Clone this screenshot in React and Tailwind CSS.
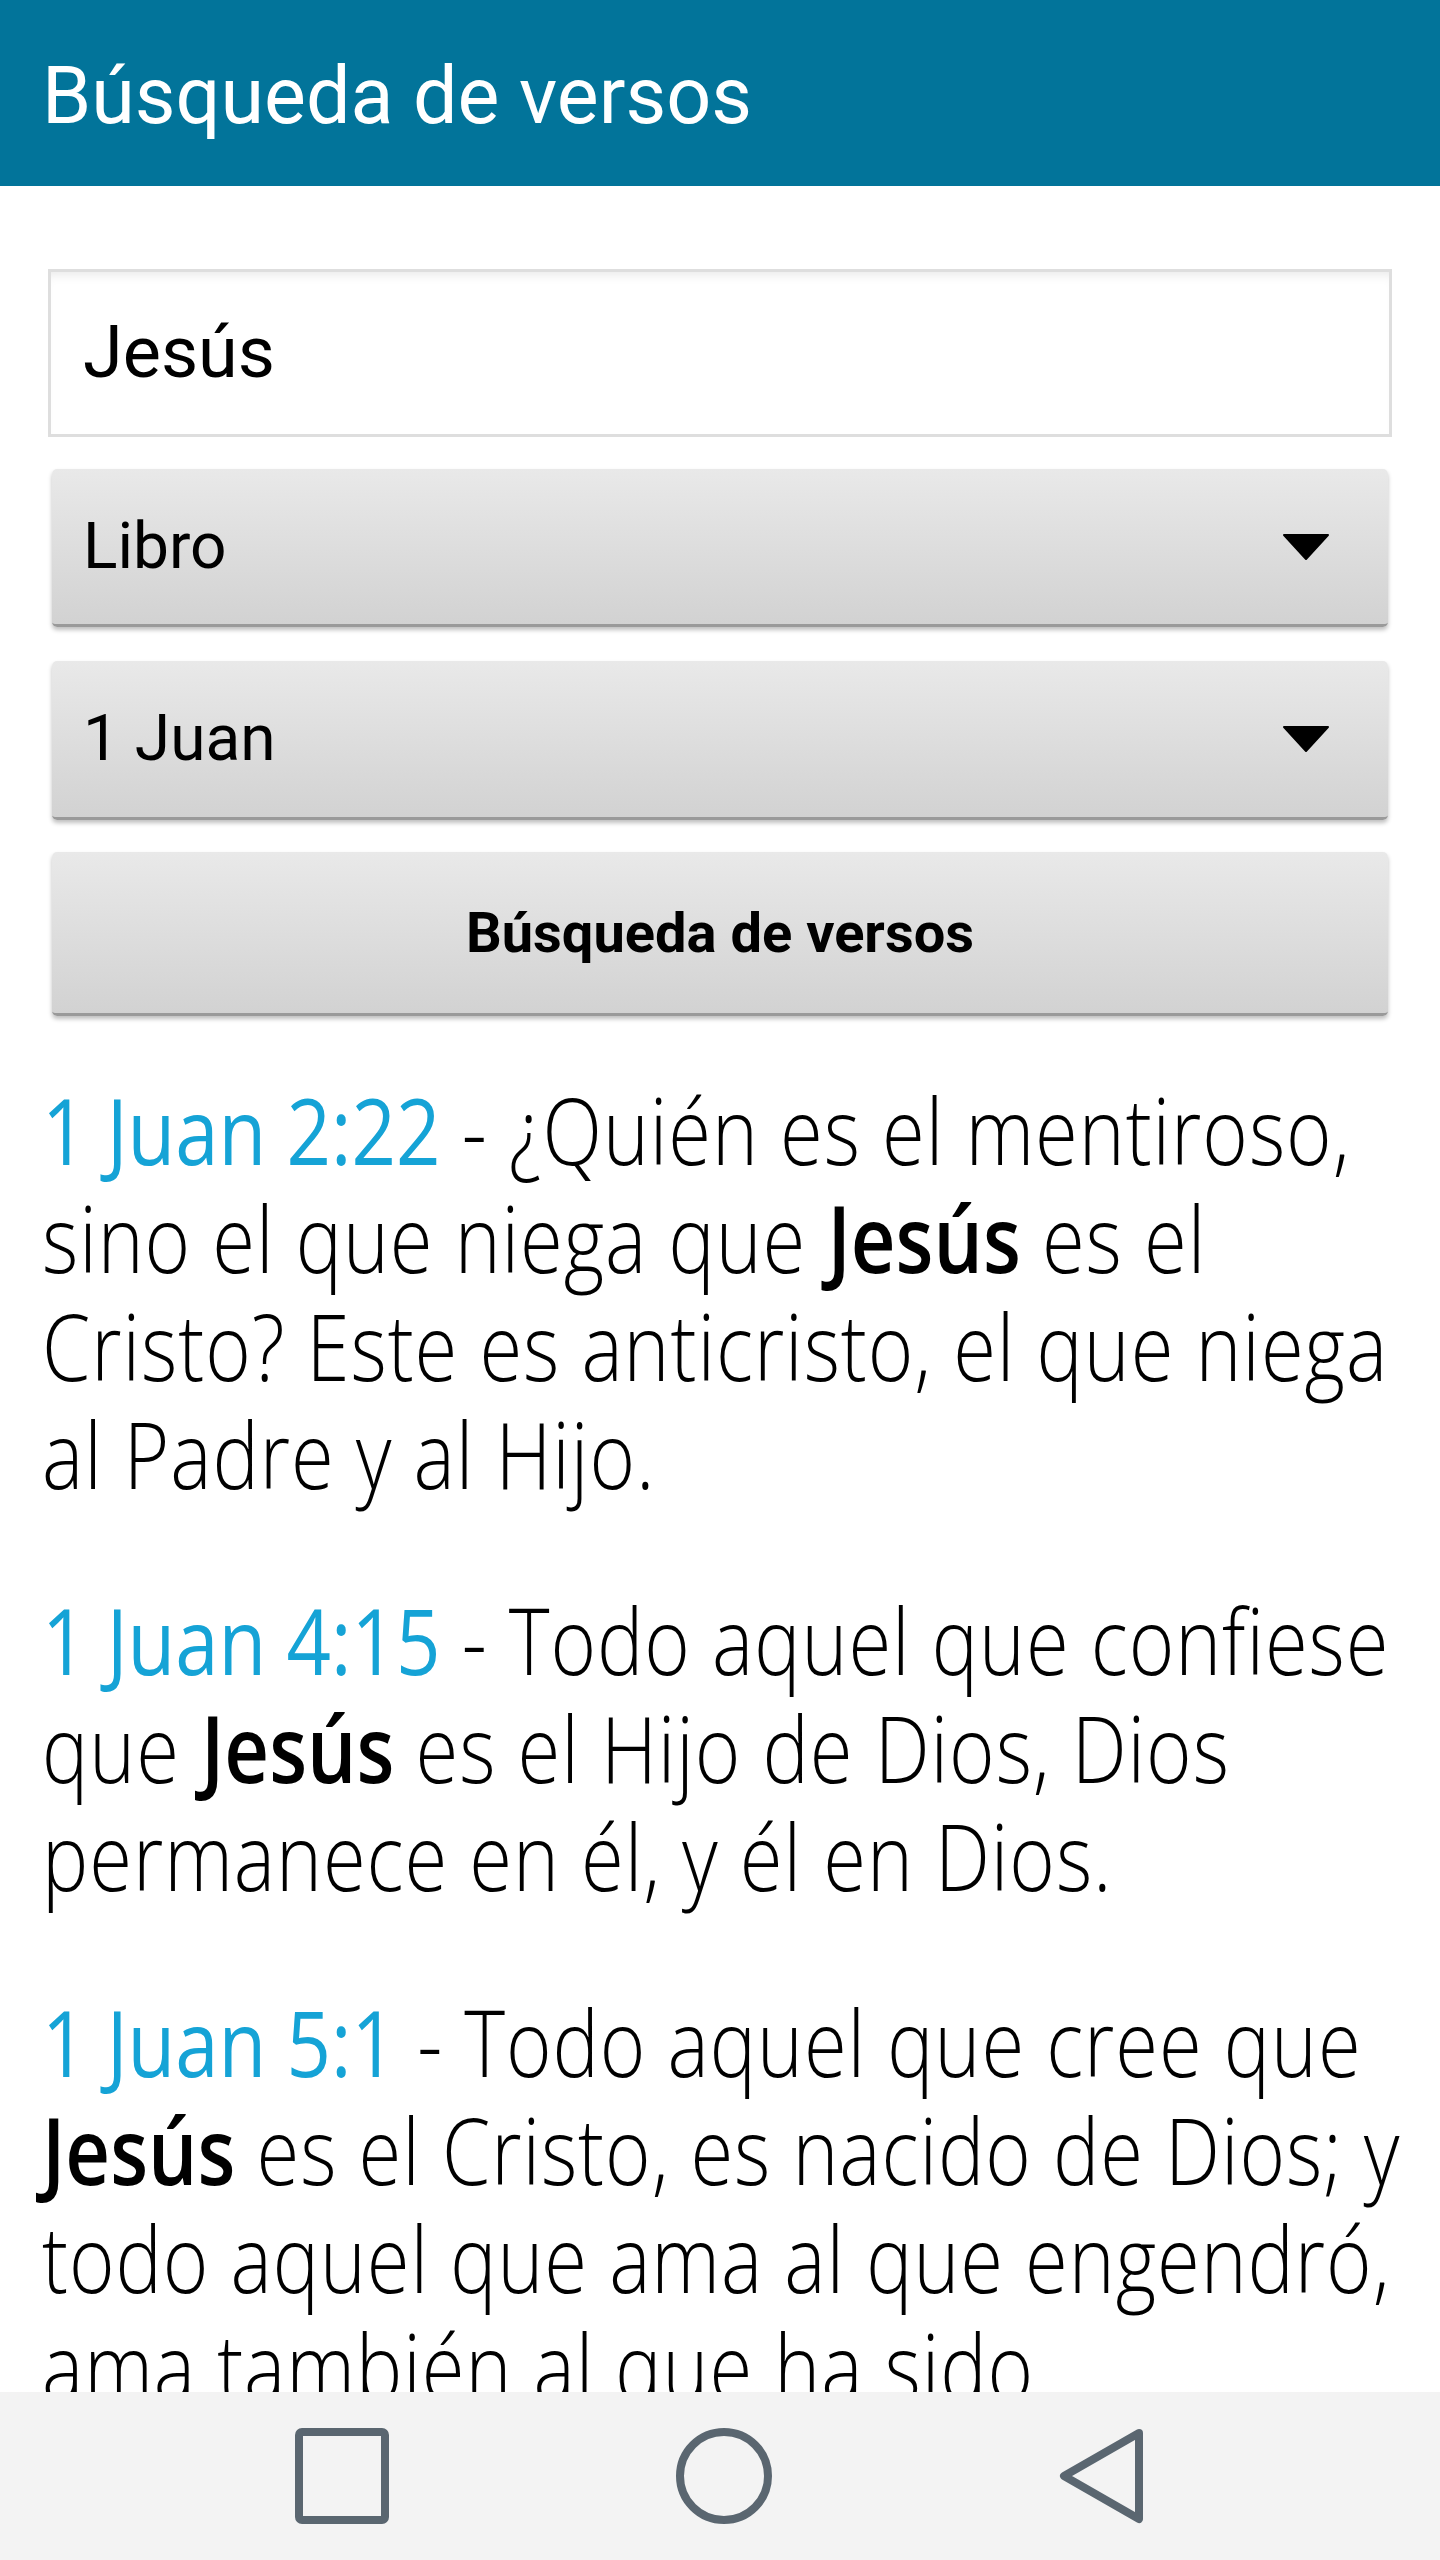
import React from "react";

function Caret() {
  return (
    <svg width="48" height="28" viewBox="0 0 48 28" className="shrink-0">
      <path d="M2 2 L46 2 L24 26 Z" fill="#000" stroke="#000" strokeWidth="2" strokeLinejoin="round" />
    </svg>
  );
}

function Select({ label, className }) {
  return (
    <div
      className={
        "mx-[4px] flex items-center justify-between rounded-[5px] border-b-[3px] border-[#9a9a9a] bg-linear-to-b from-[#e9e9e9] to-[#d2d2d2] pl-[31px] pr-[58px] shadow-[0_3px_4px_rgba(0,0,0,0.25)] " +
        className
      }
    >
      <span className="font-['Roboto'] text-[64px] leading-none text-black">{label}</span>
      <Caret />
    </div>
  );
}

function Verse({ refText, children }) {
  return (
    <p className="mb-[78px] font-['Open_Sans',sans-serif] text-[92px] font-light leading-[108px] tracking-[1.1px] text-black">
      <span className="font-normal tracking-normal text-[#15a3d6]">{refText}</span> - {children}
    </p>
  );
}

function B({ children }) {
  return <span className="font-semibold tracking-normal">{children}</span>;
}

export default function App() {
  return (
    <div className="flex h-[2560px] w-[1440px] flex-col overflow-hidden bg-white">
      <header className="flex h-[186px] shrink-0 items-center bg-[#02749a] pl-[42px] pt-[6px]">
        <h1 className="font-['Roboto'] text-[79px] font-normal leading-none text-white">Búsqueda de versos</h1>
      </header>

      <main className="flex-1 overflow-hidden">
        <div className="px-[48px] pt-[83px]">
          <div className="flex h-[168px] items-center border-[3px] border-[#dedede] bg-white pl-[32px] shadow-[inset_0_10px_12px_-8px_rgba(0,0,0,0.10)]">
            <span className="font-['Roboto'] text-[72px] leading-none text-black">Jesús</span>
          </div>
          <Select label="Libro" className="mt-[32px] h-[158px]" />
          <Select label="1 Juan" className="mt-[34px] h-[159px]" />
          <div className="mx-[4px] mt-[32px] flex h-[164px] items-center justify-center rounded-[5px] border-b-[3px] border-[#9a9a9a] bg-linear-to-b from-[#e9e9e9] to-[#d2d2d2] shadow-[0_3px_4px_rgba(0,0,0,0.25)]">
            <span className="font-['Roboto'] text-[56px] font-bold leading-none text-black">Búsqueda de versos</span>
          </div>
        </div>

        <div className="px-[42px] pt-[60px]">
          <div className="w-[1612px] origin-top-left scale-x-[0.846]">
            <Verse refText="1 Juan 2:22">
              ¿Quién es el mentiroso, sino el que niega que <B>Jesús</B> es el Cristo? Este es anticristo, el que niega al Padre y al Hijo.
            </Verse>
            <Verse refText="1 Juan 4:15">
              Todo aquel que confiese que <B>Jesús</B> es el Hijo de Dios, Dios permanece en él, y él en Dios.
            </Verse>
            <Verse refText="1 Juan 5:1">
              Todo aquel que cree que <B>Jesús</B> es el Cristo, es nacido de Dios; y todo aquel que ama al que engendró, ama también al que ha sido engendrado por él.
            </Verse>
          </div>
        </div>
      </main>

      <nav className="flex h-[168px] shrink-0 items-center justify-center gap-[287px] bg-[#f3f3f3]">
        <svg width="94" height="96" viewBox="0 0 94 96">
          <rect x="4" y="4" width="86" height="88" rx="3" fill="none" stroke="#5a6670" strokeWidth="8" />
        </svg>
        <svg width="96" height="96" viewBox="0 0 96 96">
          <circle cx="48" cy="48" r="44" fill="none" stroke="#5a6670" strokeWidth="8" />
        </svg>
        <svg width="86" height="96" viewBox="0 0 86 96">
          <path d="M80 5 L5 48 L80 91 Z" fill="none" stroke="#5a6670" strokeWidth="8" strokeLinejoin="round" />
        </svg>
      </nav>
    </div>
  );
}
